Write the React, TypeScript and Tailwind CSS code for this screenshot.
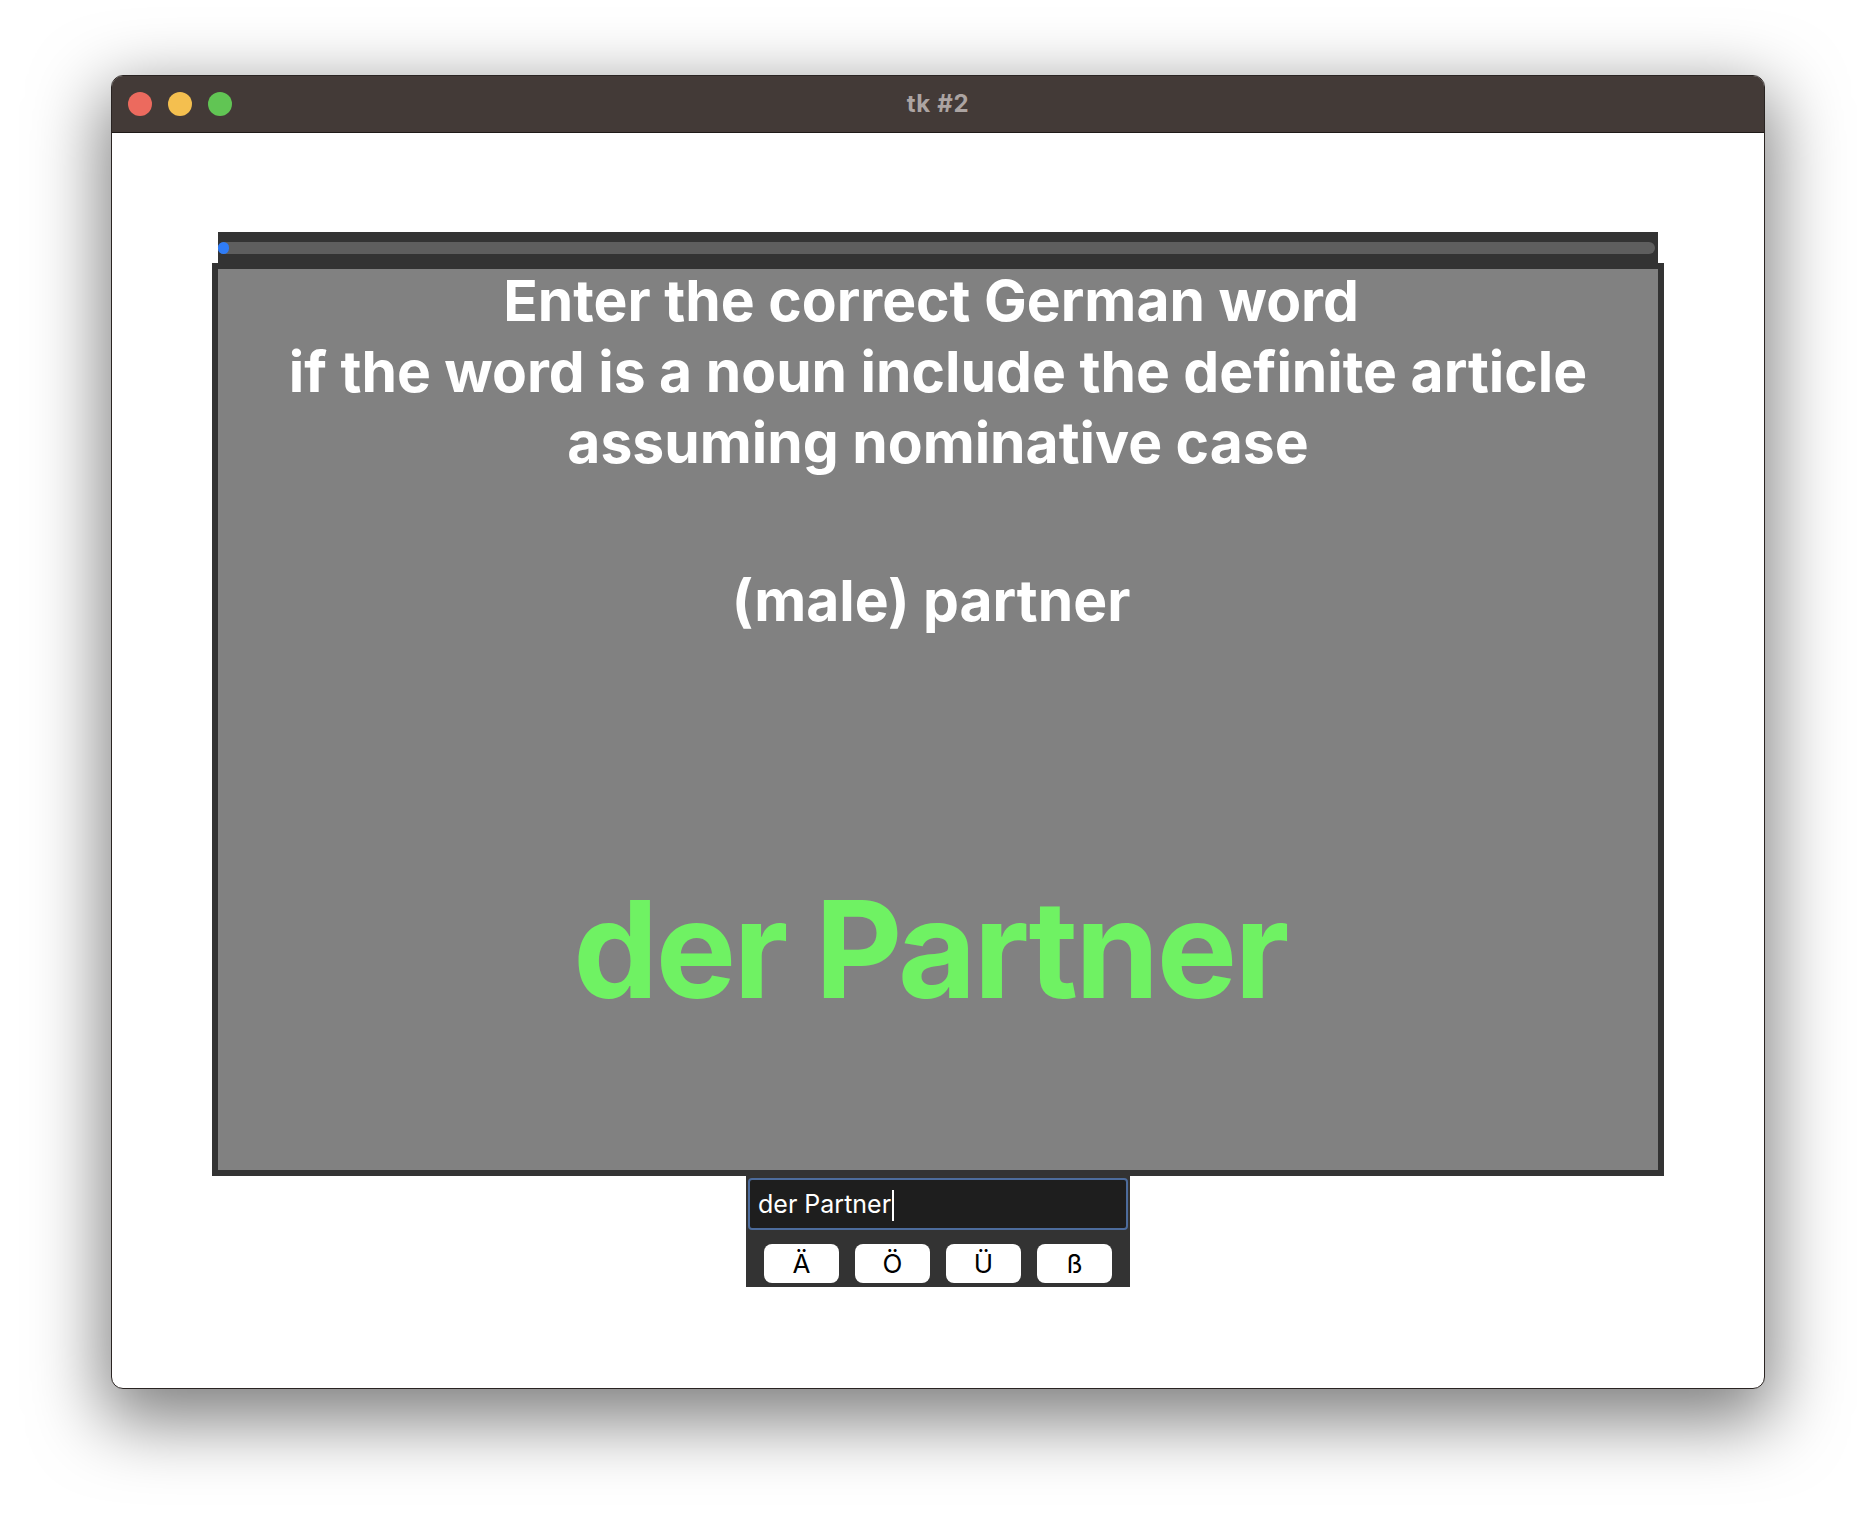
import React from 'react'

const sans = "Inter, 'Noto Sans', 'Liberation Sans', sans-serif"

function TitleBar() {
  return (
    <div className="relative flex h-[57px] items-center bg-[#433a37] border-b border-[#1f1a18]">
      <div className="flex items-center gap-4 pl-[16px]">
        <span className="h-6 w-6 rounded-full bg-[#ec6a5e]" />
        <span className="h-6 w-6 rounded-full bg-[#f4bf4f]" />
        <span className="h-6 w-6 rounded-full bg-[#61c554]" />
      </div>
      <div className="absolute inset-0 flex items-center justify-center">
        <span className="text-[24px] font-bold tracking-[0.03em] text-[#aca4a2]">tk #2</span>
      </div>
    </div>
  )
}

function ProgressBar({ value }: { value: number }) {
  return (
    <div className="h-[31px] w-[1440px] bg-[#333333] pt-[10px] pr-[3px]">
      <div className="relative h-[12px] w-full rounded-full bg-[#5e5e5e]">
        <div className="h-[12px] rounded-full bg-[#2f7cf6]" style={{ width: `${Math.max(value, 0.8)}%` }} />
      </div>
    </div>
  )
}

function Card() {
  return (
    <div className="flex h-[913px] w-[1452px] flex-col items-center border-[6px] border-[#333333] bg-[#818181] text-center">
      <div className="mt-[-4px] text-[57px] font-bold leading-[71px] text-white">
        <p className="pr-[14px]">Enter the correct German word</p>
        <p>if the word is a noun include the definite article</p>
        <p>assuming nominative case</p>
      </div>
      <p className="mt-[87px] pr-[14px] text-[57px] font-bold leading-[71px] text-white">(male) partner</p>
      <p className="mt-[246px] pr-[16px] text-[135px] font-bold leading-[135px] tracking-[-0.02em] text-[#6ff263]">
        der Partner
      </p>
    </div>
  )
}

function Keyboard() {
  const keys = ['Ä', 'Ö', 'Ü', 'ß']
  return (
    <div className="flex w-[384px] flex-col bg-[#333333] p-[2px] pb-[4px]">
      <div className="flex h-[52px] items-center rounded-[4px] border-2 border-[#4d6c9c] bg-[#1e1e1e] pl-[8px] pt-[2px]">
        <span className="text-[25px] text-white">der Partner</span>
        <span className="ml-[1px] h-[31px] w-[2px] bg-white" />
      </div>
      <div className="mt-[14px] flex justify-between px-[16px]">
        {keys.map(k => (
          <button
            key={k}
            className="flex h-[39px] w-[75px] items-center justify-center rounded-[8px] bg-white text-[26px] text-black"
          >
            {k}
          </button>
        ))}
      </div>
    </div>
  )
}

export default function App() {
  return (
    <div className="min-h-[1536px] w-full bg-white pl-[111px] pt-[75px]" style={{ fontFamily: sans }}>
      <div className="flex h-[1314px] w-[1654px] flex-col overflow-hidden rounded-[12px] border border-[#2a2422] bg-white shadow-[0_24px_70px_8px_rgba(0,0,0,0.5)]">
        <TitleBar />
        <div className="flex flex-col items-center pt-[99px]">
          <ProgressBar value={0} />
          <Card />
          <Keyboard />
        </div>
      </div>
    </div>
  )
}
